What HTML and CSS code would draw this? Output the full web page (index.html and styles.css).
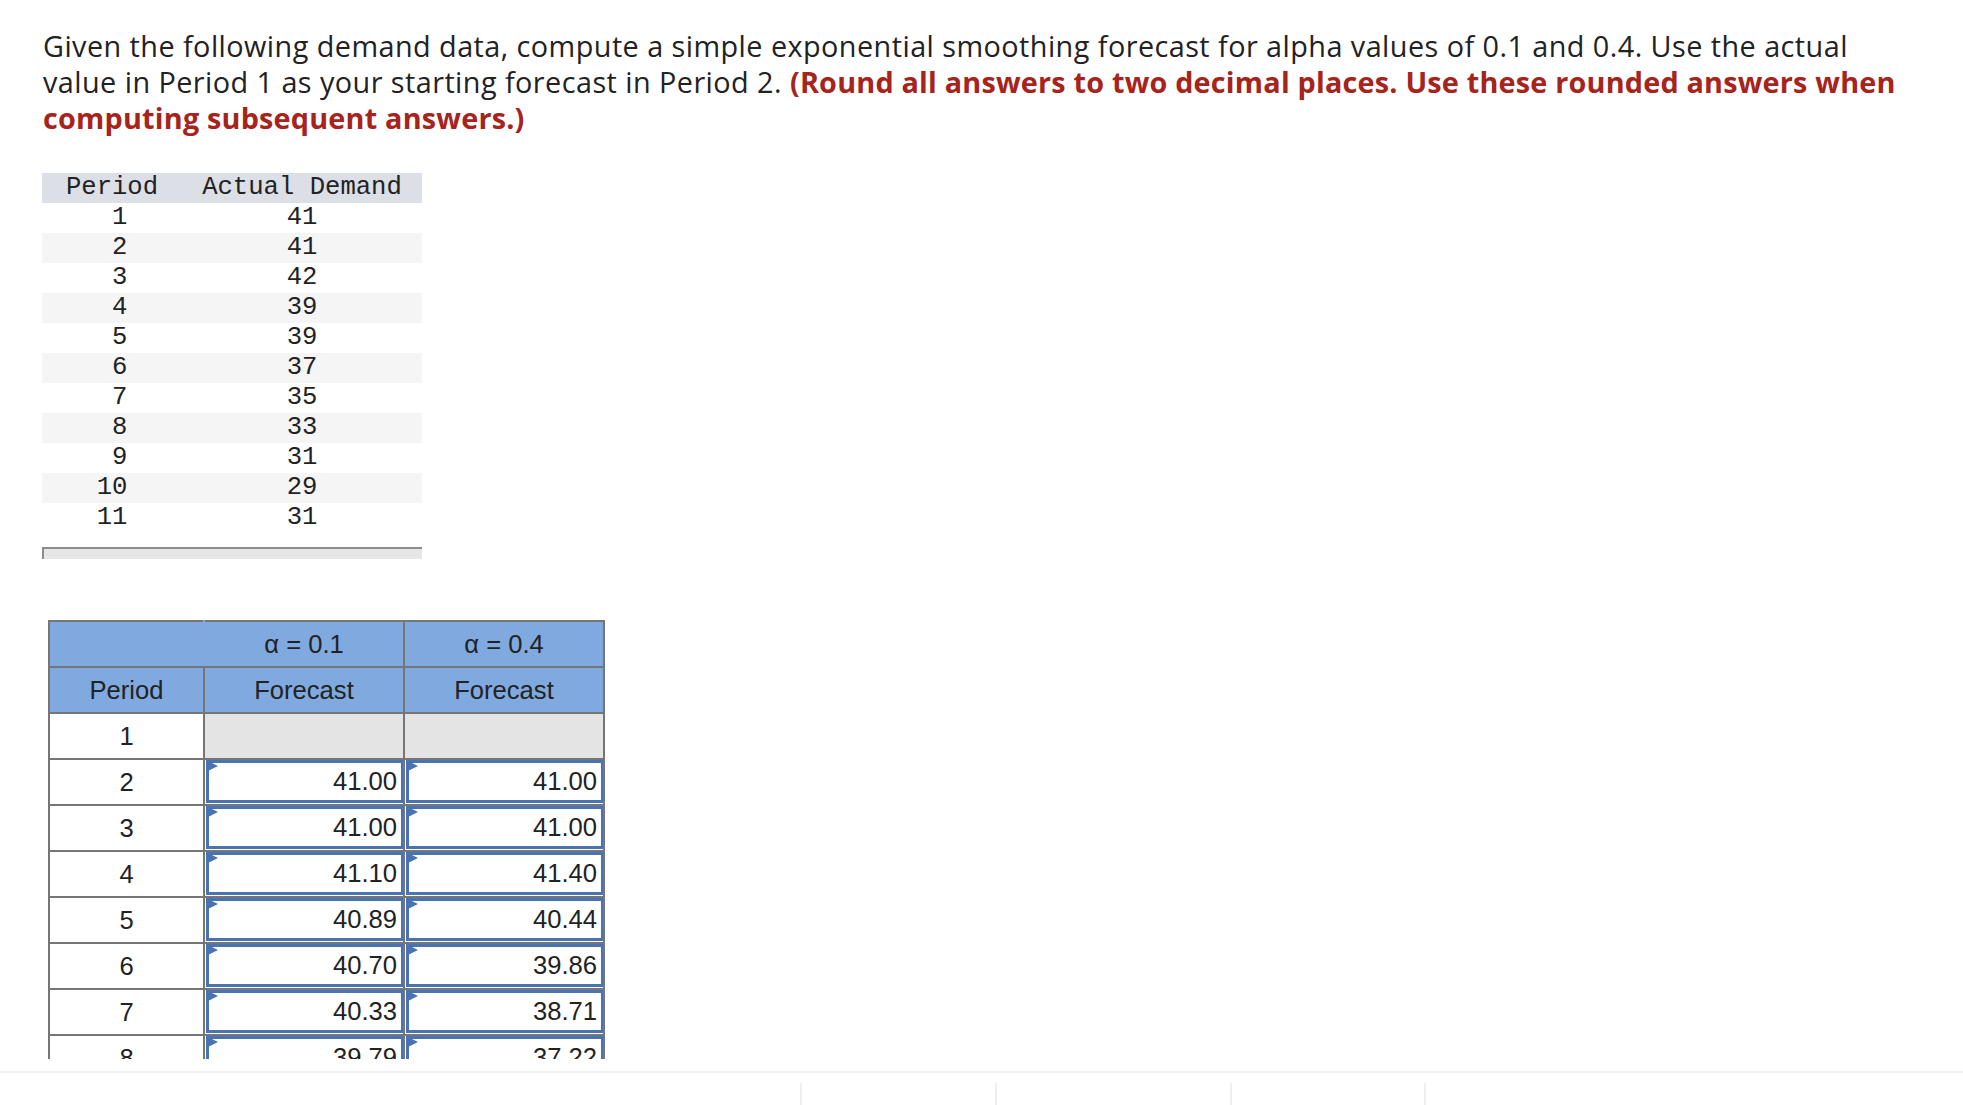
FILE: index.html
```html
<!DOCTYPE html>
<html lang="en">
<head>
<meta charset="utf-8">
<title>Exponential smoothing</title>
<link rel="stylesheet" href="styles.css">
</head>
<body>
<div class="page">
  <main class="content">
    <p class="prompt">Given the following demand data, compute a simple exponential smoothing forecast for alpha values of 0.1 and 0.4. Use the actual value in Period 1 as your starting forecast in Period 2. <strong class="note">(Round all answers to two decimal places. Use these rounded answers when computing subsequent answers.)</strong></p>

    <div class="data-wrap">
      <table class="data">
        <thead>
          <tr><th>Period</th><th>Actual Demand</th></tr>
        </thead>
        <tbody>
          <tr><td> 1</td><td>41</td></tr>
          <tr><td> 2</td><td>41</td></tr>
          <tr><td> 3</td><td>42</td></tr>
          <tr><td> 4</td><td>39</td></tr>
          <tr><td> 5</td><td>39</td></tr>
          <tr><td> 6</td><td>37</td></tr>
          <tr><td> 7</td><td>35</td></tr>
          <tr><td> 8</td><td>33</td></tr>
          <tr><td> 9</td><td>31</td></tr>
          <tr><td>10</td><td>29</td></tr>
          <tr><td>11</td><td>31</td></tr>
        </tbody>
      </table>
      <div class="hscroll"></div>
    </div>

    <table class="answers">
      <colgroup><col class="c-period"><col class="c-fc"><col class="c-fc"></colgroup>
      <thead>
        <tr class="h1"><th class="blank"></th><th>α = 0.1</th><th>α = 0.4</th></tr>
        <tr class="h2"><th>Period</th><th>Forecast</th><th>Forecast</th></tr>
      </thead>
      <tbody>
        <tr><td class="per">1</td><td class="na"></td><td class="na"></td></tr>
        <tr><td class="per">2</td><td class="in"><div class="box">41.00</div></td><td class="in"><div class="box">41.00</div></td></tr>
        <tr><td class="per">3</td><td class="in"><div class="box">41.00</div></td><td class="in"><div class="box">41.00</div></td></tr>
        <tr><td class="per">4</td><td class="in"><div class="box">41.10</div></td><td class="in"><div class="box">41.40</div></td></tr>
        <tr><td class="per">5</td><td class="in"><div class="box">40.89</div></td><td class="in"><div class="box">40.44</div></td></tr>
        <tr><td class="per">6</td><td class="in"><div class="box">40.70</div></td><td class="in"><div class="box">39.86</div></td></tr>
        <tr><td class="per">7</td><td class="in"><div class="box">40.33</div></td><td class="in"><div class="box">38.71</div></td></tr>
        <tr><td class="per">8</td><td class="in"><div class="box">39.79</div></td><td class="in"><div class="box">37.22</div></td></tr>
      </tbody>
    </table>
  </main>
  <footer class="footer">
    <nav class="footer-nav">
      <div class="fn-item"></div>
      <div class="fn-item wide"></div>
      <div class="fn-item last"></div>
    </nav>
  </footer>
</div>
</body>
</html>
```

FILE: styles.css
```css
html, body {
  margin: 0;
  padding: 0;
  background: #fff;
}

.page {
  height: 1105px;
  display: flex;
  flex-direction: column;
  overflow: hidden;
}

.content {
  height: 1059px;
  flex: none;
  overflow: hidden;
  padding: 0 43px 0 43px;
  box-sizing: border-box;
}

.prompt {
  margin: 28px 0 0 0;
  font-family: "Open Sans", Lato, sans-serif;
  font-size: 28.8px;
  line-height: 36px;
  letter-spacing: 0.45px;
  color: #222;
}

.note {
  color: #a6241c;
  font-weight: 700;
  letter-spacing: 0.2px;
}

.data-wrap {
  margin: 37px 0 0 -1px;
  width: 380px;
}

.data {
  border-collapse: collapse;
  width: 380px;
  table-layout: fixed;
  font-family: "Liberation Mono", "Courier New", monospace;
  font-size: 25.6px;
  color: #222;
}

.data th, .data td {
  padding: 0;
  height: 30px;
  line-height: 30px;
  text-align: center;
  white-space: pre;
  font-weight: 400;
}

.data th:first-child, .data td:first-child {
  width: 140px;
}

.data thead tr {
  background: #dcdfe6;
}

.data tbody tr:nth-child(even) {
  background: #f5f5f5;
}

.hscroll {
  margin-top: 14px;
  height: 10px;
  background: #e6e6e6;
  border-top: 2px solid #8c8c8c;
  border-left: 2px solid #8c8c8c;
  box-sizing: content-box;
  width: 378px;
}

.answers {
  margin: 61px 0 0 5px;
  border-collapse: collapse;
  table-layout: fixed;
  width: 557px;
  font-family: "Liberation Sans", Arial, sans-serif;
  font-size: 25.6px;
  color: #222;
  border: 2px solid #767676;
}

.c-period { width: 155px; }
.c-fc { width: 200px; }

.answers th, .answers td {
  border: 2px solid #767676;
  height: 46px;
  padding: 0;
  font-weight: 400;
  text-align: center;
  box-sizing: border-box;
}

.answers thead th {
  background: #80aadf;
}

.answers .h1 th.blank {
  border-right-color: #80aadf;
}

.answers td.na {
  background: #e4e4e4;
}

.answers td.in {
  padding: 0 0 1px 1px;
}

.box {
  position: relative;
  height: 43px;
  box-sizing: border-box;
  border: 2px solid #4a73b4;
  border-width: 3px 2px 3px 3px;
  text-align: right;
  padding-right: 4px;
  line-height: 37px;
  background: #fff;
}

.box::before {
  content: "";
  position: absolute;
  left: -3px;
  top: -3px;
  border-top: 6px solid transparent;
  border-bottom: 6px solid transparent;
  border-left: 12px solid #4a73b4;
}

.footer {
  flex: 1;
  margin-top: 12px;
  border-top: 2px solid #f0f0f0;
  padding-top: 10px;
}

.footer-nav {
  display: flex;
  margin-left: 800px;
  height: 40px;
}

.fn-item {
  width: 193px;
  border-left: 2px solid #efefef;
}

.fn-item.wide {
  width: 233px;
}

.fn-item.last {
  width: 192px;
  border-right: 2px solid #efefef;
}
```
